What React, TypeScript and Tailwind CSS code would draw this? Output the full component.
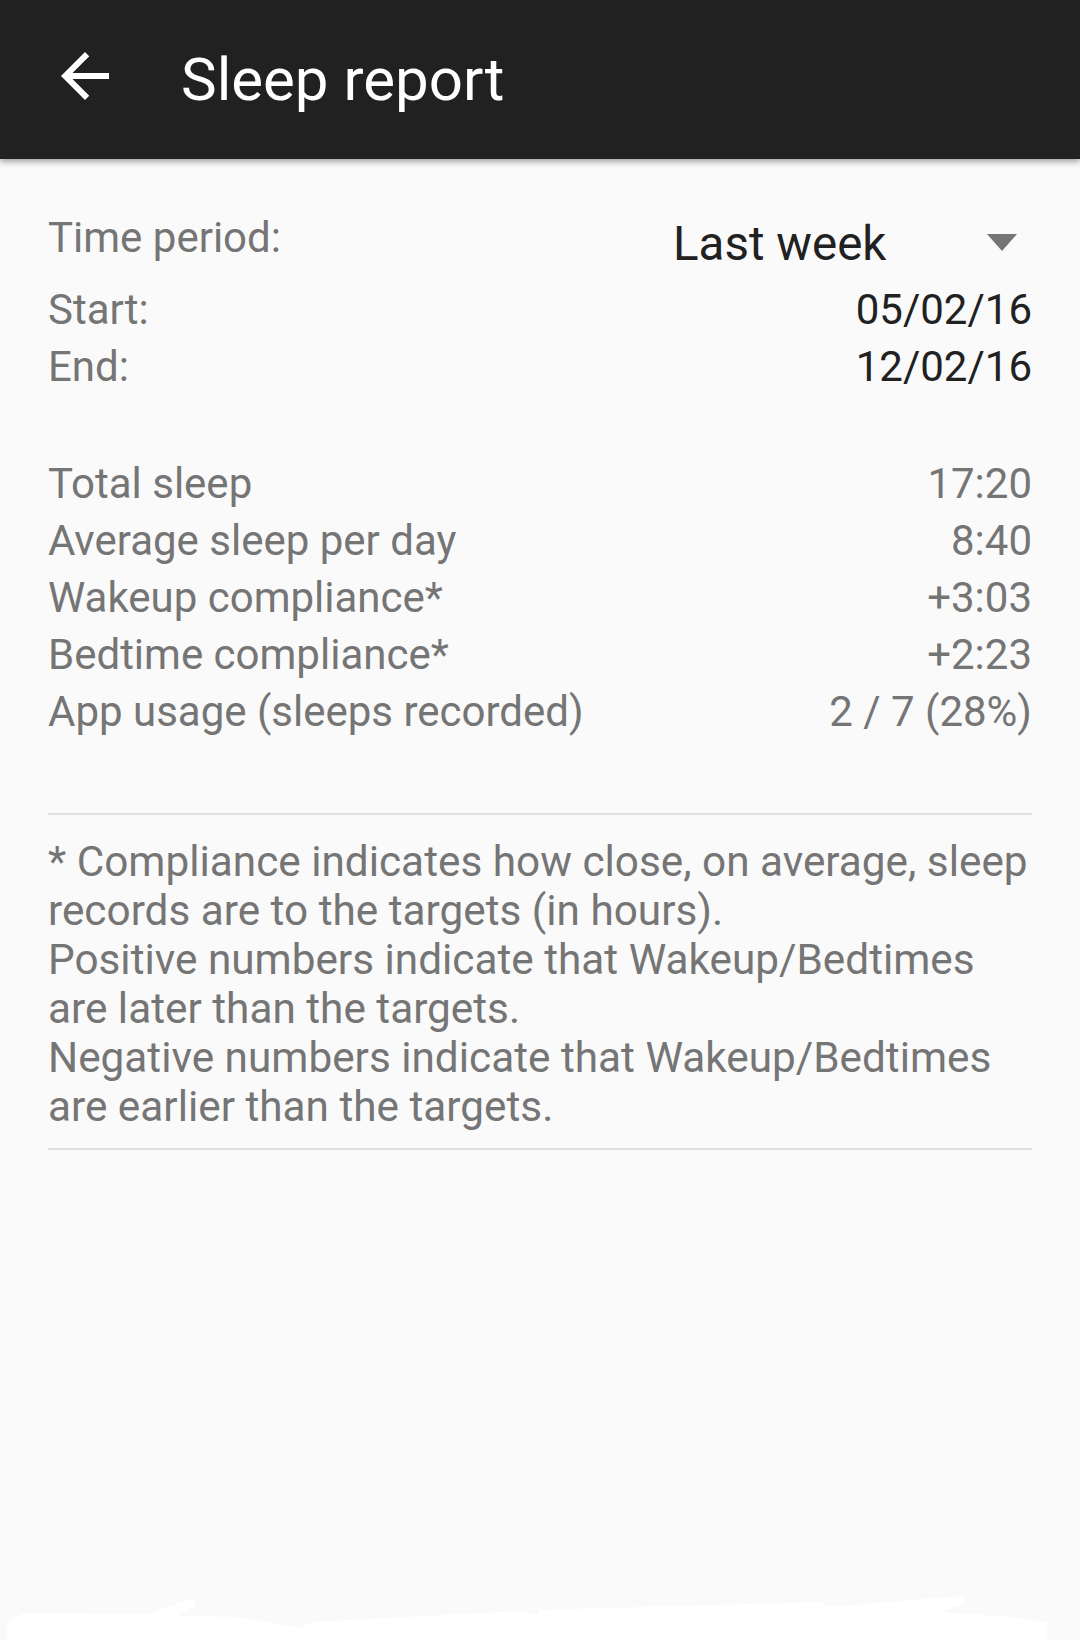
import React from "react";

const rows: [string, string][] = [
  ["Total sleep", "17:20"],
  ["Average sleep per day", "8:40"],
  ["Wakeup compliance*", "+3:03"],
  ["Bedtime compliance*", "+2:23"],
  ["App usage (sleeps recorded)", "2 / 7 (28%)"],
];

const notes = [
  "* Compliance indicates how close, on average, sleep",
  "records are to the targets (in hours).",
  "Positive numbers indicate that Wakeup/Bedtimes",
  "are later than the targets.",
  "Negative numbers indicate that Wakeup/Bedtimes",
  "are earlier than the targets.",
];

export default function App() {
  return (
    <div
      className="relative w-[1080px] h-[1640px] bg-[#fafafa] overflow-hidden"
      style={{ fontFamily: "Roboto, 'Noto Sans', sans-serif" }}
    >
      <header className="relative z-10 h-[159px] bg-[#212121] flex items-center pl-[49px] shadow-[0_3px_6px_rgba(0,0,0,0.35)]">
        <svg
          viewBox="0 0 24 24"
          className="w-[72px] h-[72px] mb-[8px] shrink-0"
          fill="#ffffff"
        >
          <path d="M20 11H7.83l5.59-5.59L12 4l-8 8 8 8 1.41-1.41L7.83 13H20v-2z" />
        </svg>
        <h1 className="ml-[60px] text-[60px] leading-[60px] text-white font-normal">
          Sleep report
        </h1>
      </header>

      <main className="px-[48px] pt-[50px]">
        <div className="flex justify-between items-start h-[72px]">
          <span className="text-[42px] leading-[57px] text-[#757575]">
            Time period:
          </span>
          <div className="mt-[7px] w-[359px] flex items-center justify-between">
            <span className="text-[47.5px] leading-[57px] text-[#212121]">
              Last week
            </span>
            <svg width="30" height="17" viewBox="0 0 30 17" className="mr-[15px] mb-[4px]">
              <polygon points="0,0 30,0 15,17" fill="#757575" />
            </svg>
          </div>
        </div>
        <div className="flex justify-between text-[42px] leading-[57px]">
          <span className="text-[#757575]">Start:</span>
          <span className="text-[#212121]">05/02/16</span>
        </div>
        <div className="flex justify-between text-[42px] leading-[57px]">
          <span className="text-[#757575]">End:</span>
          <span className="text-[#212121]">12/02/16</span>
        </div>

        <div className="mt-[60px]">
          {rows.map(([label, value]) => (
            <div
              key={label}
              className="flex justify-between text-[42px] leading-[57px] text-[#757575]"
            >
              <span>{label}</span>
              <span>{value}</span>
            </div>
          ))}
        </div>

        <div className="mt-[73px] h-[2px] bg-[#e0e0e0]" />

        <div className="mt-[22px] text-[42.3px] leading-[49px] text-[#757575]">
          {notes.map((line) => (
            <div key={line} className="whitespace-nowrap">
              {line}
            </div>
          ))}
        </div>

        <div className="mt-[17px] h-[2px] bg-[#e0e0e0]" />
      </main>

      <svg
        className="absolute left-0 bottom-0"
        width="1080"
        height="50"
        viewBox="0 1590 1080 50"
      >
        <path
          d="M7 1640 L7 1627 Q12 1615 27 1613 L150 1614 L188 1599 Q197 1597 195 1606 L176 1616 L240 1617 L300 1628 L312 1622 L520 1611 L537 1615 L540 1610 L820 1602 L828 1607 L960 1596 Q968 1596 966 1603 L940 1612 L1010 1617 L1047 1622 L1047 1640 Z"
          fill="#ffffff"
        />
      </svg>
    </div>
  );
}
